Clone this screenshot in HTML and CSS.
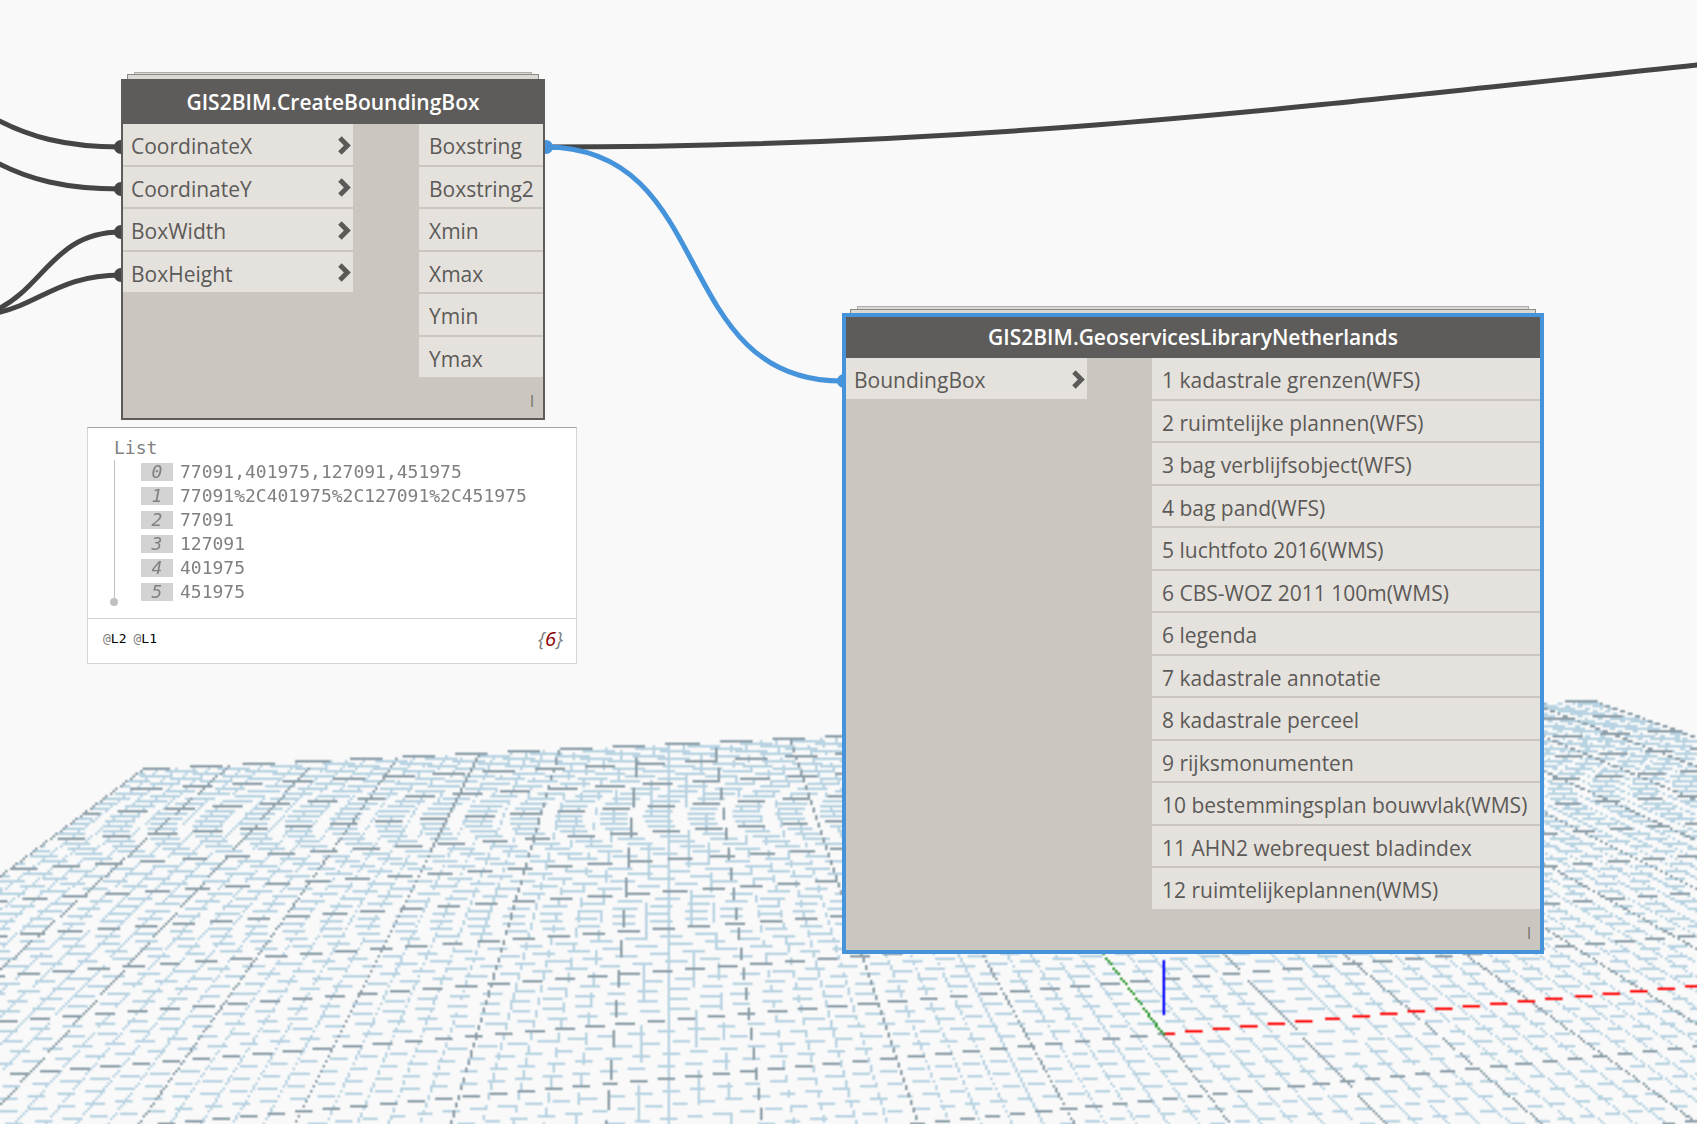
FILE: index.html
```html
<!DOCTYPE html>
<html lang="en">
<head>
<meta charset="utf-8">
<title>GIS2BIM graph</title>
<link rel="stylesheet" href="styles.css">
</head>
<body>
<main class="workspace">
  <canvas class="ground" aria-hidden="true"></canvas>

  <svg class="wires" aria-hidden="true">
    <g class="wire">
      <path d="M-8 117C28 137 66 147 121 147"/>
      <path d="M-8 160C28 180 66 189 121 189"/>
      <path d="M-4 310C44 288 54 232 121 232"/>
      <path d="M-4 313C40 304 60 275 121 275"/>
      <path d="M545 147C980 147 1300 107 1697 65L2400 -8"/>
    </g>
    <path class="wire wire-active" d="M545 147C718 147 669 381 842 381"/>
    <g class="plug">
      <circle cx="121" cy="147" r="7"/>
      <circle cx="121" cy="189" r="7"/>
      <circle cx="121" cy="232" r="7"/>
      <circle cx="121" cy="275" r="7"/>
    </g>
    <g class="plug plug-active">
      <circle cx="546" cy="147" r="7"/>
      <circle cx="844" cy="381" r="7"/>
    </g>
    <symbol id="chevron" viewBox="0 0 12 18">
      <path d="M0 3.500L3.300 0.300L12 9L3.300 17.700L0 14.500L5.400 9Z"/>
    </symbol>
  </svg>

  <article class="node node-box">
    <h2 class="node-title">GIS2BIM.CreateBoundingBox</h2>
    <div class="ports">
      <ul class="port-list inputs">
        <li class="port">CoordinateX<svg class="chevron"><use href="#chevron"/></svg></li>
        <li class="port">CoordinateY<svg class="chevron"><use href="#chevron"/></svg></li>
        <li class="port">BoxWidth<svg class="chevron"><use href="#chevron"/></svg></li>
        <li class="port">BoxHeight<svg class="chevron"><use href="#chevron"/></svg></li>
      </ul>
      <ul class="port-list outputs">
        <li class="port">Boxstring</li>
        <li class="port">Boxstring2</li>
        <li class="port">Xmin</li>
        <li class="port">Xmax</li>
        <li class="port">Ymin</li>
        <li class="port">Ymax</li>
      </ul>
    </div>
    <footer class="lacing">l</footer>
  </article>

  <article class="node node-library selected">
    <h2 class="node-title">GIS2BIM.GeoservicesLibraryNetherlands</h2>
    <div class="ports">
      <ul class="port-list inputs">
        <li class="port">BoundingBox<svg class="chevron"><use href="#chevron"/></svg></li>
      </ul>
      <ul class="port-list outputs">
        <li class="port">1 kadastrale grenzen(WFS)</li>
        <li class="port">2 ruimtelijke plannen(WFS)</li>
        <li class="port">3 bag verblijfsobject(WFS)</li>
        <li class="port">4 bag pand(WFS)</li>
        <li class="port">5 luchtfoto 2016(WMS)</li>
        <li class="port">6 CBS-WOZ 2011 100m(WMS)</li>
        <li class="port">6 legenda</li>
        <li class="port">7 kadastrale annotatie</li>
        <li class="port">8 kadastrale perceel</li>
        <li class="port">9 rijksmonumenten</li>
        <li class="port">10 bestemmingsplan bouwvlak(WMS)</li>
        <li class="port">11 AHN2 webrequest bladindex</li>
        <li class="port">12 ruimtelijkeplannen(WMS)</li>
      </ul>
    </div>
    <footer class="lacing">l</footer>
  </article>

  <section class="preview">
    <div class="preview-body">
      <h3 class="preview-title">List</h3>
      <ol class="preview-list">
        <li><span class="index">0</span>77091,401975,127091,451975</li>
        <li><span class="index">1</span>77091%2C401975%2C127091%2C451975</li>
        <li><span class="index">2</span>77091</li>
        <li><span class="index">3</span>127091</li>
        <li><span class="index">4</span>401975</li>
        <li><span class="index">5</span>451975</li>
      </ol>
    </div>
    <footer class="preview-foot">
      <div class="levels"><span><i>@</i>L2</span><span><i>@</i>L1</span></div>
      <div class="count">{<b>6</b>}</div>
    </footer>
  </section>
</main>
<script src="ground.js"></script>
</body>
</html>
```
FILE: styles.css
```css
* {
  box-sizing: border-box;
}

body {
  margin: 0;
  background: #f9f9f9;
  color: #5c5a58;
  font-family: "Open Sans", "Noto Sans", sans-serif;
  font-size: 21px;
}

h2,
h3,
ul,
ol {
  margin: 0;
  padding: 0;
  list-style: none;
}

.workspace {
  position: relative;
  isolation: isolate;
  height: 100vh;
  overflow: hidden;
}

.ground,
.wires {
  position: absolute;
  z-index: -2;
  top: 0;
  left: 0;
  width: 100%;
  height: 100%;
}

.wire {
  fill: none;
  stroke: #454545;
  stroke-width: 5;
}

.wire-active {
  stroke: #4593db;
}

.plug {
  fill: #454545;
}

.plug-active {
  fill: #4593db;
}

/* Nodes */

.node {
  position: absolute;
  background: #cbc6bf;
  border: 2px solid #5e5c5a;
}

.node::before,
.node::after {
  content: "";
  position: absolute;
  z-index: -1;
  background: #dbd9d3;
  border: 1px solid #8b8a86;
  border-bottom: 0;
}

.node::before {
  top: -9px;
  left: 11px;
  right: 11px;
  height: 7px;
  border-color: #adaca9;
}

.node::after {
  top: -7px;
  left: 4px;
  right: 4px;
  height: 5px;
}

.node-box {
  top: 79px;
  left: 121px;
  width: 424px;
}

.node-library {
  top: 313px;
  left: 842px;
  width: 702px;
}

.selected {
  border: 4px solid #4593db;
}

.selected::before {
  top: -11px;
}

.selected::after {
  top: -8px;
}

.node-title {
  height: 43px;
  background: #5e5c5a;
  color: #fff;
  font-size: 21px;
  font-weight: 600;
  line-height: 43px;
  text-align: center;
}

.selected .node-title {
  height: 41px;
  line-height: 41px;
}

.ports {
  display: flex;
  justify-content: space-between;
}

.port-list {
  display: flex;
  flex-direction: column;
  gap: 2px;
}

.node-box .inputs {
  width: 230px;
}

.node-box .outputs {
  width: 124px;
}

.node-library .inputs {
  width: 241px;
}

.node-library .outputs {
  width: 388px;
}

.port {
  display: flex;
  align-items: center;
  justify-content: space-between;
  height: 41px;
  padding: 3px 8px 0;
  background: #e5e2dd;
  line-height: 38px;
  white-space: nowrap;
}

.port:nth-child(even) {
  height: 40px;
}

.inputs .port {
  padding-right: 2px;
}

.outputs .port {
  padding-right: 0;
  padding-left: 10px;
}

.chevron {
  width: 13px;
  height: 19px;
  margin-bottom: 2px;
  fill: #5c5a58;
}

.lacing {
  height: 41px;
  padding-right: 9px;
  color: #75726e;
  font-size: 16px;
  line-height: 48px;
  text-align: right;
}

/* Value preview */

.preview {
  position: absolute;
  top: 427px;
  left: 87px;
  width: 490px;
  background: #fff;
  border: 1px solid #d4d4d4;
  border-top-color: #a8a8a8;
  color: #808080;
  font-family: "DejaVu Sans Mono", "Liberation Mono", monospace;
  font-size: 18px;
}

.preview-body {
  padding: 8px 26px 14px;
  border-bottom: 1px solid #d4d4d4;
}

.preview-title {
  font-size: 18px;
  font-weight: 400;
  line-height: 24px;
}

.preview-list {
  position: relative;
  padding: 0 0 0 27px;
  line-height: 24px;
}

.preview-list::before {
  content: "";
  position: absolute;
  top: 0;
  bottom: 0;
  left: 0;
  width: 1px;
  background: #c0c0c0;
}

.preview-list::after {
  content: "";
  position: absolute;
  bottom: -2px;
  left: -4px;
  width: 8px;
  height: 8px;
  border-radius: 50%;
  background: #c0c0c0;
}

.preview-list li {
  display: flex;
  align-items: center;
  gap: 7px;
}

.index {
  width: 32px;
  height: 18px;
  background: #d3d3d3;
  font-style: italic;
  line-height: 18px;
  text-align: center;
}

.preview-foot {
  display: flex;
  align-items: center;
  justify-content: space-between;
  height: 44px;
  padding: 0 13px 5px 15px;
}

.levels {
  display: flex;
  gap: 7px;
  color: #000;
  font-size: 13px;
}

.levels i {
  color: #808080;
  font-style: normal;
}

.count {
  font-family: "Open Sans", "Noto Sans", sans-serif;
  font-size: 20px;
  font-style: italic;
}

.count b {
  color: #8b0000;
  font-weight: 400;
}
```
FILE: ground.js
```js
// Ground grid in perspective, rasterised on a coarse pixel lattice.
const CELL = 2.5;
const HORIZON = 374;
const ORIGIN = { x: 1163, y: 1034 };
const VANISH_X = 8500;
const VANISH_Y = 668.75;
const STEP_X = 0.01752 / 5;
const STEP_Y = 0.0845 / 5;
const EXTENT = 50;
const LINE = 0.62;

const LIGHT = [184, 211, 226];
const DARK = [140, 158, 168];
const RED = [255, 10, 10];
const GREEN = [30, 145, 30];
const BLUE = [0, 0, 255];

function project(x, y) {
  const w = 1 + STEP_X * x + STEP_Y * y;
  return {
    x: (ORIGIN.x + STEP_X * x * VANISH_X + STEP_Y * y * VANISH_Y) / w,
    y: HORIZON + (ORIGIN.y - HORIZON) / w,
  };
}

function draw() {
  const canvas = document.querySelector(".ground");
  canvas.width = canvas.clientWidth;
  canvas.height = canvas.clientHeight;
  const cols = Math.ceil(canvas.width / CELL);
  const rows = Math.ceil(canvas.height / CELL);
  const buffer = document.createElement("canvas");
  buffer.width = cols;
  buffer.height = rows;
  const bufferCtx = buffer.getContext("2d");
  const image = bufferCtx.createImageData(cols, rows);
  for (let i = 0; i < image.data.length; i += 4) {
    image.data.set([249, 249, 249, 255], i);
  }

  function plot(c, r, color) {
    if (c < 0 || r < 0 || c >= cols || r >= rows) return;
    image.data.set(color, (r * cols + c) * 4);
  }

  // A lattice pixel is lit when its centre lies within the line's width.
  function line(a, b, color) {
    const ax = a.x / CELL, ay = a.y / CELL, bx = b.x / CELL, by = b.y / CELL;
    const dx = bx - ax, dy = by - ay;
    const len = Math.hypot(dx, dy);
    if (Math.abs(dx) > Math.abs(dy)) {
      const half = LINE / 2 * len / Math.abs(dx);
      const from = Math.max(0, Math.ceil(Math.min(ax, bx) - 0.5));
      const to = Math.min(cols, Math.max(ax, bx) - 0.5);
      for (let c = from; c <= to; c++) {
        const y = ay + (c + 0.5 - ax) * dy / dx;
        const r = Math.floor(y);
        if (Math.abs(y - r - 0.5) < half) plot(c, r, color);
      }
    } else {
      const half = LINE / 2 * len / Math.abs(dy);
      const from = Math.max(0, Math.ceil(Math.min(ay, by) - 0.5));
      const to = Math.min(rows, Math.max(ay, by) - 0.5);
      for (let r = from; r <= to; r++) {
        const x = ax + (r + 0.5 - ay) * dx / dy;
        const c = Math.floor(x);
        if (Math.abs(x - c - 0.5) < half) plot(c, r, color);
      }
    }
  }

  function gridLines(major, color) {
    for (let i = -EXTENT; i <= EXTENT; i++) {
      if ((i % 5 === 0) !== major) continue;
      line(project(i, -40), project(i, EXTENT), color);
      line(project(-EXTENT, i), project(EXTENT, i), color);
    }
  }

  gridLines(false, LIGHT);
  gridLines(true, DARK);
  line(project(0, 0), project(EXTENT, 0), RED);
  line(project(0, 0), project(0, 20), GREEN);
  line({ x: 1163.75, y: 961 }, { x: 1163.75, y: 1015 }, BLUE);

  bufferCtx.putImageData(image, 0, 0);
  const ctx = canvas.getContext("2d");
  ctx.imageSmoothingEnabled = true;
  ctx.drawImage(buffer, 0, 0, cols * CELL, rows * CELL);
}

draw();
window.addEventListener("resize", draw);
```
